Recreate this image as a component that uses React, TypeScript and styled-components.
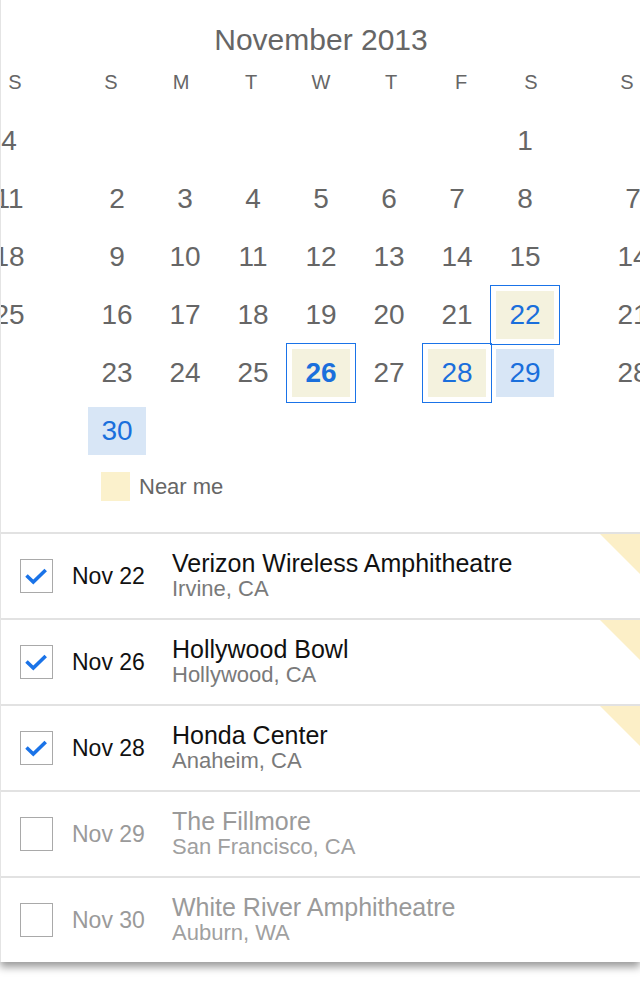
import React from "react";
import styled, { createGlobalStyle, css } from "styled-components";

const GlobalStyle = createGlobalStyle`
  html, body {
    margin: 0;
    padding: 0;
    background: #fff;
  }
  body {
    font-family: "Liberation Sans", Arial, Helvetica, sans-serif;
    -webkit-font-smoothing: antialiased;
  }
`;

/* ── Card shell ─────────────────────────────────── */
const Page = styled.div`
  padding-bottom: 24px;
`;

const Card = styled.div`
  position: relative;
  background: #fff;
  border-left: 1px solid #e4e4e4;
  box-shadow: 0 5px 8px rgba(0, 0, 0, 0.4);
  overflow: hidden;
`;

/* ── Calendar carousel ──────────────────────────── */
const CalendarSection = styled.section`
  padding: 20px 0 31px;
  overflow: hidden;
`;

const MonthStrip = styled.div`
  display: flex;
  gap: 40px;
  margin-left: -434px;
`;

const Month = styled.div`
  width: 476px;
  flex-shrink: 0;
  display: flex;
  flex-direction: column;
  align-items: center;
`;

const MonthTitle = styled.h2`
  margin: 0;
  height: 40px;
  line-height: 40px;
  font-size: 30px;
  font-weight: 400;
  color: #666;
  white-space: nowrap;
`;

const WeekdayRow = styled.div`
  display: grid;
  grid-template-columns: repeat(7, 70px);
  margin-top: 10px;
  flex-shrink: 0;
`;

const Weekday = styled.span`
  text-align: center;
  font-size: 20px;
  line-height: 24px;
  color: #666;
`;

const DayGrid = styled.div`
  display: grid;
  grid-template-columns: repeat(7, 68px);
  grid-auto-rows: 58px;
  margin-top: 18px;
`;

type Tone = "plain" | "near" | "picked";

const DayCell = styled.div<{ $outlined?: boolean }>`
  display: flex;
  align-items: center;
  justify-content: center;
  ${({ $outlined }) =>
    $outlined &&
    css`
      outline: 1px solid #1a73e8;
      outline-offset: 0;
    `}
`;

const DayNum = styled.span<{ $tone: Tone; $bold?: boolean }>`
  width: 58px;
  height: 48px;
  display: flex;
  align-items: center;
  justify-content: center;
  font-size: 28px;
  font-weight: ${({ $bold }) => ($bold ? 700 : 400)};
  color: ${({ $tone }) => ($tone === "plain" ? "#666" : "#1a6fdc")};
  background: ${({ $tone }) =>
    $tone === "near" ? "#f4f2de" : $tone === "picked" ? "#d8e6f6" : "transparent"};
`;

const Legend = styled.div`
  display: flex;
  align-items: center;
  gap: 9px;
  margin-top: 12px;
  padding-left: 100px;
`;

const Swatch = styled.span`
  width: 29px;
  height: 29px;
  background: #fbf1cc;
`;

const LegendText = styled.span`
  font-size: 22px;
  color: #666;
`;

/* ── Event list ─────────────────────────────────── */
const List = styled.ul`
  list-style: none;
  margin: 0;
  padding: 0;
`;

const Row = styled.li`
  position: relative;
  height: 84px;
  border-top: 2px solid #e2e2e2;
  display: flex;
  align-items: center;
  padding-left: 19px;
`;

const Corner = styled.span`
  position: absolute;
  top: 0;
  right: 0;
  width: 40px;
  height: 40px;
  background: #fcefc7;
  clip-path: polygon(0 0, 100% 0, 100% 100%);
`;

const Box = styled.span`
  width: 33px;
  height: 34px;
  box-sizing: border-box;
  border: 1px solid #a9a9a9;
  background: #fff;
  flex-shrink: 0;
  display: block;
  svg {
    display: block;
  }
`;

const DateText = styled.span<{ $muted?: boolean }>`
  width: 100px;
  margin-left: 19px;
  font-size: 23px;
  color: ${({ $muted }) => ($muted ? "#9a9a9a" : "#111")};
  white-space: nowrap;
`;

const Info = styled.div`
  display: flex;
  flex-direction: column;
  margin-top: -2px;
`;

const Venue = styled.span<{ $muted?: boolean }>`
  font-size: 25px;
  line-height: 27px;
  color: ${({ $muted }) => ($muted ? "#9a9a9a" : "#111")};
  white-space: nowrap;
`;

const Place = styled.span<{ $muted?: boolean }>`
  font-size: 22px;
  line-height: 24px;
  color: ${({ $muted }) => ($muted ? "#a0a0a0" : "#7a7a7a")};
  white-space: nowrap;
`;

/* ── Data ───────────────────────────────────────── */
type Day = { n: number; tone?: Tone; outlined?: boolean; bold?: boolean } | null;

const range = (a: number, b: number): Day[] =>
  Array.from({ length: b - a + 1 }, (_, i) => ({ n: a + i }));

const pad = (count: number): Day[] => Array.from({ length: count }, () => null);

const months: { title: string; days: Day[] }[] = [
  {
    title: "October 2013",
    days: [...pad(3), ...range(1, 31), ...pad(1)],
  },
  {
    title: "November 2013",
    days: [
      ...pad(6),
      ...range(1, 21),
      { n: 22, tone: "near", outlined: true },
      ...range(23, 25),
      { n: 26, tone: "near", outlined: true, bold: true },
      { n: 27 },
      { n: 28, tone: "near", outlined: true },
      { n: 29, tone: "picked" },
      { n: 30, tone: "picked" },
    ],
  },
  {
    title: "December 2013",
    days: [...pad(1), ...range(1, 31)],
  },
];

const weekdays = ["S", "M", "T", "W", "T", "F", "S"];

const events = [
  { date: "Nov 22", venue: "Verizon Wireless Amphitheatre", place: "Irvine, CA", on: true, near: true },
  { date: "Nov 26", venue: "Hollywood Bowl", place: "Hollywood, CA", on: true, near: true },
  { date: "Nov 28", venue: "Honda Center", place: "Anaheim, CA", on: true, near: true },
  { date: "Nov 29", venue: "The Fillmore", place: "San Francisco, CA", on: false, near: false },
  { date: "Nov 30", venue: "White River Amphitheatre", place: "Auburn, WA", on: false, near: false },
];

const Check = () => (
  <svg width="31" height="32" viewBox="0 0 31 32">
    <polyline
      points="5.5,15.5 12.3,22 24.7,10"
      fill="none"
      stroke="#1a73e8"
      strokeWidth="3.6"
      strokeLinejoin="miter"
    />
  </svg>
);

export default function App() {
  return (
    <Page>
      <GlobalStyle />
      <Card>
        <CalendarSection>
          <MonthStrip>
            {months.map((m) => (
              <Month key={m.title}>
                <MonthTitle>{m.title}</MonthTitle>
                <WeekdayRow>
                  {weekdays.map((w, i) => (
                    <Weekday key={i}>{w}</Weekday>
                  ))}
                </WeekdayRow>
                <DayGrid>
                  {m.days.map((d, i) => (
                    <DayCell key={i} $outlined={d?.outlined}>
                      {d && (
                        <DayNum $tone={d.tone ?? "plain"} $bold={d.bold}>
                          {d.n}
                        </DayNum>
                      )}
                    </DayCell>
                  ))}
                </DayGrid>
              </Month>
            ))}
          </MonthStrip>
          <Legend>
            <Swatch />
            <LegendText>Near me</LegendText>
          </Legend>
        </CalendarSection>

        <List>
          {events.map((e) => (
            <Row key={e.date}>
              {e.near && <Corner />}
              <Box>{e.on && <Check />}</Box>
              <DateText $muted={!e.on}>{e.date}</DateText>
              <Info>
                <Venue $muted={!e.on}>{e.venue}</Venue>
                <Place $muted={!e.on}>{e.place}</Place>
              </Info>
            </Row>
          ))}
        </List>
      </Card>
    </Page>
  );
}
